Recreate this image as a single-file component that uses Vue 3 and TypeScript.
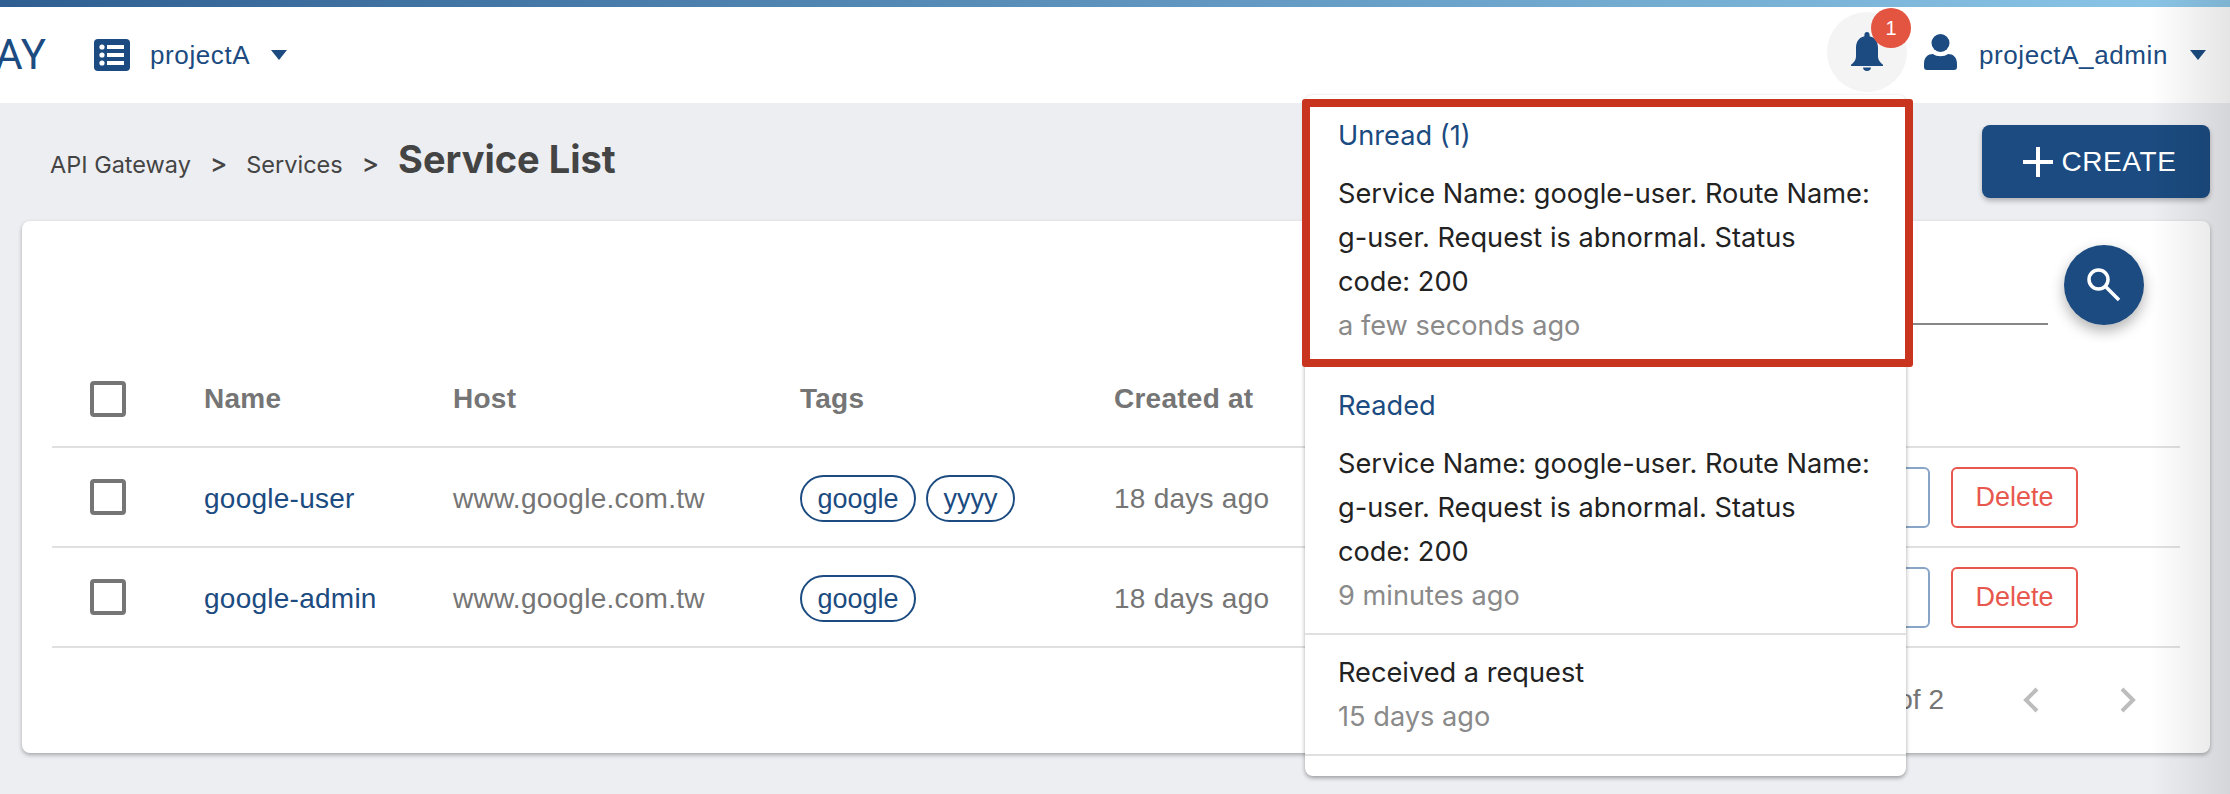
<template>
  <div class="page">
    <div class="topbar"></div>
    <header class="header">
      <div class="brand">AY</div>
      <svg class="project-icon" viewBox="0 0 36 32">
        <rect width="36" height="32" rx="4" fill="#1b4b80" />
        <circle cx="8" cy="8" r="2.6" fill="#fff" />
        <circle cx="8" cy="16" r="2.6" fill="#fff" />
        <circle cx="8" cy="24" r="2.6" fill="#fff" />
        <rect x="13" y="6" width="17" height="4" fill="#fff" />
        <rect x="13" y="14" width="17" height="4" fill="#fff" />
        <rect x="13" y="22" width="17" height="4" fill="#fff" />
      </svg>
      <span class="project-name">projectA</span>
      <span class="caret"></span>
      <div class="spacer"></div>
      <div class="bell">
        <svg class="bell-icon" viewBox="0 0 32 39">
          <path d="M16 0c-1.7 0-2.6 1.2-2.6 2.9v1.4C7.5 5.700 5 10.300 5 16v8.500c0 3.300-2 6.100-5 8.300V34h32v-1.200c-3-2.200-5-5-5-8.300V16c0-5.700-2.500-10.300-8.400-11.700V2.900C18.600 1.200 17.700 0 16 0z" fill="#1b4b80" />
          <path d="M12 35.500h8c0 2-1.600 3.500-4 3.500s-4-1.500-4-3.500z" fill="#1b4b80" />
        </svg>
        <span class="badge">1</span>
      </div>
      <svg class="user-icon" viewBox="0 0 33 36">
        <circle cx="16.500" cy="9" r="9" fill="#1b4b80" />
        <path d="M0 30c0-7 4-10 9-10 2 1.500 4.500 2.200 7.500 2.200S22 21.500 24 20c5 0 9 3 9 10v3c0 2-1 3-3 3H3c-2 0-3-1-3-3z" fill="#1b4b80" />
      </svg>
      <span class="user-name">projectA_admin</span>
      <span class="caret user-caret"></span>
    </header>

    <main class="content">
      <div class="title-row">
        <nav class="crumbs">
          <span>API Gateway</span>
          <b class="sep">&gt;</b>
          <span>Services</span>
          <b class="sep">&gt;</b>
          <h1>Service List</h1>
        </nav>
        <button class="create">
          <svg class="plus" viewBox="0 0 30 30"><path d="M15 0v30M0 15h30" stroke="#fff" stroke-width="4" /></svg>
          CREATE
        </button>
      </div>

      <section class="card">
        <div class="search-row">
          <div class="search-line"></div>
          <div class="search-btn">
            <svg viewBox="0 0 34 34" width="34" height="34">
              <circle cx="11.500" cy="11.500" r="9.500" fill="none" stroke="#fff" stroke-width="3.500" />
              <path d="M18.500 18.500L32 32" stroke="#fff" stroke-width="3.500" />
            </svg>
          </div>
        </div>

        <div class="row head">
          <span class="check"></span>
          <span class="col-name">Name</span>
          <span class="col-host">Host</span>
          <span class="col-tags">Tags</span>
          <span class="col-date">Created at</span>
        </div>
        <div v-for="s in services" :key="s.name" class="row body-row">
          <span class="check"></span>
          <a class="col-name link">{{ s.name }}</a>
          <span class="col-host">{{ s.host }}</span>
          <span class="col-tags tags">
            <span v-for="t in s.tags" :key="t" class="tag">{{ t }}</span>
          </span>
          <span class="col-date">{{ s.created }}</span>
          <span class="spacer"></span>
          <button class="btn edit">Edit</button>
          <button class="btn delete">Delete</button>
        </div>

        <div class="pager">
          <span>1-2 of 2</span>
          <svg class="chev first" viewBox="0 0 18 26"><path d="M15 2L4 13l11 11" /></svg>
          <svg class="chev" viewBox="0 0 18 26"><path d="M3 2l11 11L3 24" /></svg>
        </div>
      </section>
    </main>

    <div class="edge-shade"></div>

    <div class="panel">
      <div class="unread-box">
        <div class="group-title">Unread (1)</div>
        <div class="msg">Service Name: google-user. Route Name:<br />g-user. Request is abnormal. Status<br />code: 200</div>
        <div class="time">a few seconds ago</div>
      </div>
      <div class="readed">
        <div class="group-title">Readed</div>
        <div class="msg">Service Name: google-user. Route Name:<br />g-user. Request is abnormal. Status<br />code: 200</div>
        <div class="time">9 minutes ago</div>
      </div>
      <div class="received">
        <div class="msg">Received a request</div>
        <div class="time">15 days ago</div>
      </div>
    </div>
  </div>
</template>

<script setup lang="ts">
interface Service {
  name: string
  host: string
  tags: string[]
  created: string
}

const services: Service[] = [
  { name: 'google-user', host: 'www.google.com.tw', tags: ['google', 'yyyy'], created: '18 days ago' },
  { name: 'google-admin', host: 'www.google.com.tw', tags: ['google'], created: '18 days ago' },
]
</script>

<style>
html,
body {
  margin: 0;
  background: #edeef2;
  overflow: hidden;
}
</style>

<style scoped>
.page {
  position: relative;
  width: 2230px;
  height: 794px;
  overflow: hidden;
  background: #edeef2;
  font-family: "Liberation Sans", Arial, sans-serif;
}

.topbar {
  height: 7px;
  background: linear-gradient(90deg, #2f5f92, #8cc7e8);
}

.header {
  height: 96px;
  background: #fff;
  display: flex;
  align-items: center;
  color: #1b4b80;
}

.brand {
  width: 46px;
  display: flex;
  justify-content: flex-end;
  font-family: Roboto, sans-serif;
  font-size: 42px;
  margin-right: 48px;
  line-height: 1;
}

.project-icon {
  width: 36px;
  height: 32px;
}

.project-name {
  font-size: 26px;
  margin-left: 20px;
  letter-spacing: 0.6px;
}

.caret {
  width: 0;
  height: 0;
  border-left: 8.5px solid transparent;
  border-right: 8.5px solid transparent;
  border-top: 10px solid #1b4b80;
  margin-left: 21px;
}

.spacer {
  flex: 1;
}

.bell {
  position: relative;
  width: 80px;
  height: 80px;
  margin-top: -7px;
  border-radius: 50%;
  background: #f4f4f4;
  display: flex;
  align-items: center;
  justify-content: center;
}

.bell-icon {
  width: 32px;
  height: 39px;
}

.badge {
  position: absolute;
  top: -4px;
  right: -4px;
  width: 40px;
  height: 40px;
  border-radius: 50%;
  background: #e35441;
  color: #fff;
  font-size: 20px;
  line-height: 40px;
  text-align: center;
}

.user-icon {
  width: 33px;
  height: 36px;
  margin-left: 17px;
  margin-top: -7px;
}

.user-name {
  font-size: 26px;
  margin-left: 22px;
  letter-spacing: 0.6px;
}

.user-caret {
  margin-left: 22px;
  margin-right: 24px;
}

.content {
  padding: 22px 20px 0 22px;
}

.title-row {
  height: 96px;
  display: flex;
  align-items: flex-start;
  justify-content: space-between;
}

.crumbs {
  display: flex;
  align-items: baseline;
  padding: 11px 0 0 28px;
  color: #444;
  font-family: Inter, sans-serif;
  font-size: 23.500px;
}

.crumbs h1 {
  margin: 0;
  font-size: 38px;
  font-weight: 700;
}

.sep {
  margin: 0 19px;
  font-weight: 500;
  font-size: 26px;
}

.create {
  width: 228px;
  height: 73px;
  border: 0;
  border-radius: 8px;
  padding: 0 0 0 8px;
  background: #1b4b80;
  color: #fff;
  font-family: "Liberation Sans", Arial, sans-serif;
  font-size: 28px;
  letter-spacing: 0.6px;
  display: flex;
  align-items: center;
  justify-content: center;
  gap: 8px;
  box-shadow: 0 3px 5px rgba(0, 0, 0, 0.25);
}

.plus {
  width: 30px;
  height: 30px;
}

.card {
  height: 532px;
  box-sizing: border-box;
  border-radius: 8px;
  background: #fff;
  box-shadow: 0 2px 4px rgba(0, 0, 0, 0.3);
  padding: 0 30px;
  position: relative;
}

.search-row {
  height: 130px;
  display: flex;
  justify-content: flex-end;
  align-items: flex-start;
  padding-top: 24px;
  box-sizing: border-box;
  padding-right: 36px;
  position: relative;
}

.search-line {
  position: absolute;
  right: 132px;
  top: 102px;
  width: 300px;
  height: 2px;
  background: #888;
}

.search-btn {
  width: 80px;
  height: 80px;
  border-radius: 50%;
  background: #1b4b80;
  display: flex;
  align-items: center;
  justify-content: center;
  box-shadow: 0 6px 14px rgba(0, 0, 0, 0.3);
}

.row {
  height: 100px;
  display: flex;
  align-items: center;
  box-sizing: border-box;
  border-bottom: 2px solid #e0e0e0;
  font-size: 28px;
  letter-spacing: 0.25px;
  color: #757575;
}

.head {
  height: 97px;
  font-weight: 700;
}

.body-row .link,
.body-row .col-host,
.body-row .col-date {
  padding-top: 3px;
}

.check {
  width: 36px;
  height: 36px;
  box-sizing: border-box;
  border: 4px solid #757575;
  border-radius: 4px;
  margin-left: 38px;
  margin-right: 78px;
}

.col-name {
  width: 249px;
}

.link {
  color: #1b4b80;
}

.col-host {
  width: 347px;
}

.col-tags {
  width: 314px;
}

.tags {
  display: flex;
  gap: 10px;
}

.tag {
  height: 47px;
  margin-top: 3px;
  box-sizing: border-box;
  border: 2px solid #1b4b80;
  border-radius: 24px;
  padding: 0 15.500px;
  line-height: 45px;
  font-size: 27px;
  letter-spacing: 0;
  color: #1b4b80;
}

.btn {
  height: 61px;
  box-sizing: border-box;
  background: #fff;
  border-radius: 6px;
  font-family: "Liberation Sans", Arial, sans-serif;
  font-size: 27px;
}

.edit {
  width: 100px;
  border: 2px solid #88a5c8;
  color: #1b4b80;
  margin-right: 21px;
}

.delete {
  width: 127px;
  border: 2px solid #e8574e;
  color: #e8574e;
  margin-right: 102px;
}

.pager {
  display: flex;
  align-items: center;
  justify-content: flex-end;
  height: 104px;
  color: #757575;
  font-size: 28px;
  padding-right: 43px;
}

.chev {
  width: 18px;
  height: 26px;
  margin-left: 79px;
  fill: none;
  stroke: #bdbdbd;
  stroke-width: 4;
}

.first {
  margin-left: 78px;
}

.edge-shade {
  position: absolute;
  top: 0;
  right: 0;
  bottom: 0;
  width: 80px;
  background: linear-gradient(90deg, rgba(0, 0, 0, 0), rgba(0, 0, 0, 0.1));
  pointer-events: none;
}

.panel {
  position: absolute;
  left: 1305px;
  top: 95px;
  width: 601px;
  height: 681px;
  box-sizing: border-box;
  background: #fff;
  border-radius: 8px;
  box-shadow: 0 2px 4px rgba(0, 0, 0, 0.35);
  font-family: Inter, sans-serif;
  font-size: 27.200px;
  color: #222;
}

.unread-box {
  position: absolute;
  left: -3px;
  top: 4px;
  width: 611px;
  height: 268px;
  box-sizing: border-box;
  border: 8px solid #c9341f;
  border-radius: 3px;
  padding: 7px 0 0 28px;
}

.readed {
  position: absolute;
  left: 33px;
  top: 289px;
}

.received {
  position: absolute;
  left: 0;
  right: 0;
  top: 538px;
  height: 123px;
  box-sizing: border-box;
  padding: 16px 33px 0;
  border-top: 2px solid #e0e0e0;
  border-bottom: 2px solid #e0e0e0;
}

.group-title {
  color: #1b4b80;
  line-height: 44px;
  margin-bottom: 14px;
}

.msg {
  line-height: 44px;
}

.time {
  color: #8a8a8a;
  line-height: 44px;
}
</style>
